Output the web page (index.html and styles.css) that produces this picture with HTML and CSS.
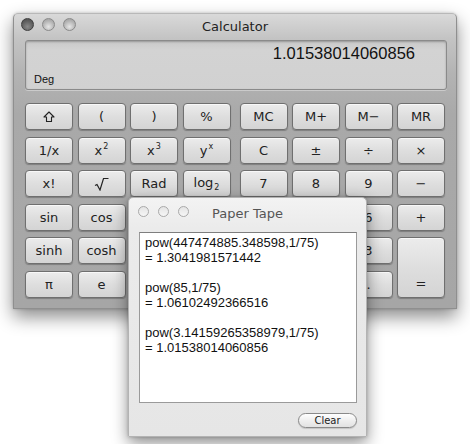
FILE: index.html
```html
<!DOCTYPE html>
<html>
	<head>
		<meta charset="UTF-8">
		<title>Calculator</title>
		<link rel="stylesheet" href="styles.css">
	</head>
	<body>
		<div class="calc">
			<div class="titlebar">
				<div class="lights">
					<span class="light dark"></span>
					<span class="light"></span>
					<span class="light"></span>
				</div>
				<div class="title">Calculator</div>
			</div>
			<div class="display">
				<div class="value">1.01538014060856</div>
				<div class="mode">Deg</div>
			</div>
			<div class="keypad">
				<!-- keys covered by the paper tape are left without labels -->
				<div class="keys">
					<div class="key">
						<svg width="12" height="12" viewBox="0 0 12 12"><path d="M6 1 L11 6 H8.5 V10.5 H3.5 V6 H1 Z" fill="none" stroke="#222" stroke-width="1.1" stroke-linejoin="round"/></svg>
					</div>
					<div class="key">(</div>
					<div class="key">)</div>
					<div class="key">%</div>
					<div class="key">1/x</div>
					<div class="key"><span>x<sup>2</sup></span></div>
					<div class="key"><span>x<sup>3</sup></span></div>
					<div class="key"><span>y<sup>x</sup></span></div>
					<div class="key">x!</div>
					<div class="key">
						<svg width="15" height="14" viewBox="0 0 15 14"><polyline points="1,8.5 3,7.5 6,13 9.5,1.5 14.5,1.5" fill="none" stroke="#222" stroke-width="1.2"/></svg>
					</div>
					<div class="key">Rad</div>
					<div class="key"><span>log<sub>2</sub></span></div>
					<div class="key">sin</div>
					<div class="key">cos</div>
					<div class="key"></div>
					<div class="key"></div>
					<div class="key">sinh</div>
					<div class="key">cosh</div>
					<div class="key"></div>
					<div class="key"></div>
					<div class="key">π</div>
					<div class="key">e</div>
					<div class="key"></div>
					<div class="key"></div>
				</div>
				<div class="keys">
					<div class="key">MC</div>
					<div class="key">M+</div>
					<div class="key">M−</div>
					<div class="key">MR</div>
					<div class="key">C</div>
					<div class="key">±</div>
					<div class="key">÷</div>
					<div class="key">×</div>
					<div class="key">7</div>
					<div class="key">8</div>
					<div class="key">9</div>
					<div class="key">−</div>
					<div class="key"></div>
					<div class="key"></div>
					<div class="key">6</div>
					<div class="key">+</div>
					<div class="key"></div>
					<div class="key"></div>
					<div class="key">3</div>
					<div class="key tall">=</div>
					<div class="key wide"></div>
					<div class="key">.</div>
				</div>
			</div>
		</div>

		<div class="tape">
			<div class="titlebar small">
				<div class="lights">
					<span class="ring"></span>
					<span class="ring"></span>
					<span class="ring"></span>
				</div>
				<div class="title">Paper Tape</div>
			</div>
			<div class="tape-list">
				<div class="entry">pow(447474885.348598,1/75)<br>= 1.3041981571442</div>
				<div class="entry">pow(85,1/75)<br>= 1.06102492366516</div>
				<div class="entry">pow(3.14159265358979,1/75)<br>= 1.01538014060856</div>
			</div>
			<div class="tape-foot">
				<div class="btn">Clear</div>
			</div>
		</div>
	</body>
</html>
```

FILE: styles.css
```css
* {
	margin: 0;
	padding: 0;
	box-sizing: border-box;
}
body {
	background: #fff;
	font-family: "DejaVu Sans", sans-serif;
	width: 470px;
	height: 444px;
	overflow: hidden;
	position: relative;
}

/* calculator window */
.calc {
	position: absolute;
	left: 13px;
	top: 13px;
	width: 444px;
	height: 296px;
	border-radius: 5px 5px 0 0;
	background: linear-gradient(#d9d9d9 0, #c4c4c4 24px, #b3b3b3 60px, #a9a9a9 100px, #a6a6a6 100%);
	border: 1px solid #8f8f8f;
	border-top-color: #b8b8b8;
	box-shadow: 0 8px 18px rgba(0, 0, 0, .45), 0 0 3px rgba(0, 0, 0, .2);
}
.titlebar {
	position: relative;
	height: 24px;
	display: flex;
	align-items: center;
	justify-content: center;
}
.lights {
	position: absolute;
	left: 7px;
	top: 4px;
	display: flex;
	gap: 8px;
}
.light {
	width: 13px;
	height: 13px;
	border-radius: 50%;
	background: radial-gradient(circle at 50% 70%, #e6e6e6, #b4b4b4 60%, #9a9a9a);
	border: 1px solid #8a8a8a;
}
.light.dark {
	background: radial-gradient(circle at 50% 70%, #8a8a8a, #5e5e5e 60%, #4a4a4a);
	border-color: #3e3e3e;
}
.title {
	font-size: 13px;
	color: #222;
}

.display {
	margin: 2px 9px 0 11px;
	height: 50px;
	border: 1px solid #8a8a8a;
	border-radius: 3px;
	background: linear-gradient(#c9c9c9, #d3d3d3 20%, #d1d1d1);
	box-shadow: inset 0 1px 2px rgba(0, 0, 0, .25), 0 1px 0 rgba(255, 255, 255, .35);
	display: flex;
	flex-direction: column;
	justify-content: space-between;
	padding: 2px 31px 3px 8px;
}
.value {
	font-family: "Liberation Sans", sans-serif;
	font-size: 16.5px;
	line-height: 20px;
	text-align: right;
	color: #111;
}
.mode {
	font-family: "Liberation Sans", sans-serif;
	font-size: 11px;
	line-height: 13px;
	color: #111;
}

.keypad {
	display: flex;
	gap: 9px;
	margin: 13px 0 0 11px;
}
.keys {
	display: grid;
	grid-template-columns: repeat(4, 48px);
	grid-auto-rows: 27px;
	column-gap: 4.5px;
	row-gap: 6.6px;
	grid-auto-flow: dense;
}
.key {
	display: flex;
	align-items: center;
	justify-content: center;
	border: 1px solid #6f6f6f;
	border-radius: 4px;
	background: linear-gradient(#ececec, #dedede 50%, #d4d4d4);
	box-shadow: inset 0 1px 0 #f8f8f8, 0 1px 1px rgba(0, 0, 0, .25);
	font-size: 13px;
	color: #222;
}
.key.tall {
	grid-row: span 2;
	align-items: flex-end;
	padding-bottom: 6px;
}
.key.wide {
	grid-column: span 2;
}
.key sup {
	font-size: 8px;
	vertical-align: 6px;
	margin-left: 1px;
}
.key sub {
	font-size: 8px;
	vertical-align: -3px;
	margin-left: 1px;
}

/* paper tape window */
.tape {
	position: absolute;
	left: 128px;
	top: 197px;
	width: 239px;
	height: 240px;
	border-radius: 5px 5px 0 0;
	background: linear-gradient(#f3f3f3 0, #ebebeb 30px, #e6e6e6 100%);
	border: 1px solid #b3b3b3;
	box-shadow: 0 6px 16px rgba(0, 0, 0, .45), 0 0 3px rgba(0, 0, 0, .2);
}
.titlebar.small {
	height: 30px;
}
.titlebar.small .lights {
	left: 9px;
	top: 8px;
	gap: 9px;
}
.ring {
	width: 11px;
	height: 11px;
	border-radius: 50%;
	border: 1px solid #a9a9a9;
	background: linear-gradient(#e4e4e4, #f6f6f6);
}
.titlebar.small .title {
	color: #555;
	padding-top: 1px;
}
.tape-list {
	margin: 4px 9px 0 10px;
	height: 171px;
	background: #fff;
	border: 1px solid #9a9a9a;
	border-top-color: #7e7e7e;
	padding: 2px 5px;
	font-family: "Liberation Sans", sans-serif;
	font-size: 13px;
	line-height: 15px;
	color: #111;
}
.entry {
	margin-bottom: 15px;
}
.tape-foot {
	display: flex;
	justify-content: flex-end;
	padding: 10px 9px 0 0;
}
.btn {
	width: 59px;
	height: 15px;
	border: 1px solid #8a8a8a;
	border-radius: 8px;
	background: linear-gradient(#ffffff, #efefef 50%, #e2e2e2);
	box-shadow: 0 1px 1px rgba(0, 0, 0, .15);
	font-size: 10px;
	line-height: 13px;
	text-align: center;
	color: #222;
}
```
